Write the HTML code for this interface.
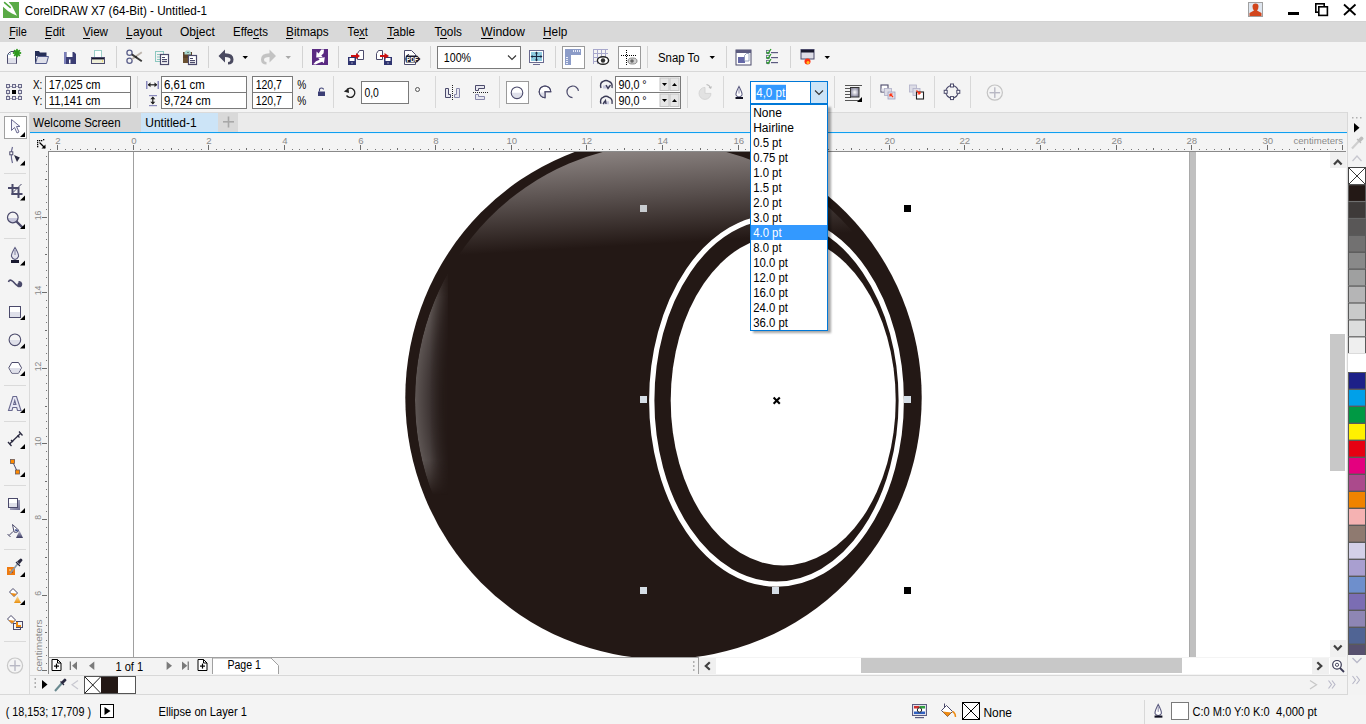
<!DOCTYPE html><html><head><meta charset="utf-8"><style>html,body{margin:0;padding:0;width:1366px;height:724px;overflow:hidden;background:#f3f3f3}svg{display:block}text{font-family:"Liberation Sans",sans-serif}</style></head><body><svg width="1366" height="724" viewBox="0 0 1366 724" shape-rendering="auto"><rect x="0" y="0" width="1366" height="724" fill="#f4f4f4" />
<rect x="0" y="0" width="1366" height="21" fill="#ffffff" />
<rect x="0" y="21" width="1366" height="21" fill="#d9d9d9" />
<rect x="0" y="21" width="1366" height="1" fill="#d3d3d3" />
<rect x="0" y="42" width="1366" height="29" fill="#f4f4f4" />
<rect x="0" y="71" width="1366" height="1" fill="#d8d8d8" />
<rect x="0" y="72" width="1366" height="40" fill="#f4f4f4" />
<rect x="0" y="112" width="1366" height="1" fill="#dadada" />
<rect x="30" y="113" width="1317" height="19" fill="#ebebeb" />
<rect x="30" y="113" width="111" height="19" fill="#d6d6d6" />
<rect x="141" y="113" width="77" height="19" fill="#cce4f7" />
<rect x="218" y="113" width="20" height="19" fill="#d9d9d9" />
<rect x="30" y="132" width="1317" height="1" fill="#0f9ff0" />
<rect x="30" y="133" width="1317" height="1" fill="#e2f1fa" />
<rect x="29" y="112" width="1" height="583" fill="#dadada" />
<defs><clipPath id="cv"><rect x="49" y="152" width="1281" height="505"/></clipPath><clipPath id="inner"><ellipse cx="664.5" cy="400" rx="249.5" ry="256"/></clipPath><linearGradient id="gtop" gradientUnits="userSpaceOnUse" x1="664" y1="148" x2="669.5" y2="243"><stop offset="0" stop-color="#8a8280"/><stop offset="0.5" stop-color="#574e4c"/><stop offset="1" stop-color="#231815"/></linearGradient><radialGradient id="gring" cx="0.5" cy="0.5" r="0.5"><stop offset="0.885" stop-color="#281f1c" stop-opacity="1"/><stop offset="0.935" stop-color="#3a3130" stop-opacity="1"/><stop offset="1" stop-color="#5e5654" stop-opacity="1"/></radialGradient><linearGradient id="gbx" gradientUnits="userSpaceOnUse" x1="430" y1="0" x2="448" y2="0"><stop offset="0" stop-color="#fff" stop-opacity="1"/><stop offset="1" stop-color="#fff" stop-opacity="0.15"/></linearGradient><linearGradient id="gby" gradientUnits="userSpaceOnUse" x1="0" y1="262" x2="0" y2="495"><stop offset="0" stop-color="#fff" stop-opacity="0"/><stop offset="0.15" stop-color="#fff" stop-opacity="1"/><stop offset="0.85" stop-color="#fff" stop-opacity="1"/><stop offset="1" stop-color="#fff" stop-opacity="0"/></linearGradient><mask id="mbx" maskUnits="userSpaceOnUse" x="380" y="150" width="120" height="500"><rect x="380" y="150" width="68" height="500" fill="url(#gbx)"/></mask><mask id="mby" maskUnits="userSpaceOnUse" x="380" y="150" width="120" height="500"><rect x="380" y="150" width="120" height="500" fill="url(#gby)"/></mask></defs>
<rect x="48" y="151" width="1298" height="506" fill="#ffffff" />
<g clip-path="url(#cv)">
<rect x="133" y="152" width="1" height="505" fill="#a0a0a0" />
<rect x="1189" y="152" width="7" height="505" fill="#c0c0c0" />
<rect x="1189" y="152" width="1" height="505" fill="#a9a9a9" />
<ellipse cx="663.5" cy="397.5" rx="258.2" ry="261.5" fill="#231815"/>
<g clip-path="url(#inner)">
<rect x="400" y="140" width="540" height="120" fill="url(#gtop)" />
<g mask="url(#mby)"><ellipse cx="664.5" cy="400" rx="249.5" ry="256" fill="url(#gring)" mask="url(#mbx)"/></g>
</g>
<ellipse cx="776.5" cy="400.5" rx="124.75" ry="183.6" fill="none" stroke="#ffffff" stroke-width="5.3"/>
<ellipse cx="783.2" cy="400.4" rx="112.5" ry="165" fill="#ffffff"/>
<rect x="640.0" y="205.0" width="7" height="7" fill="#c8ccd0" />
<rect x="904.0" y="205.0" width="7" height="7" fill="#000" />
<rect x="640.0" y="396.0" width="7" height="7" fill="#d5dde5" />
<rect x="904.0" y="396.0" width="7" height="7" fill="#d5dde5" />
<rect x="640.0" y="587.0" width="7" height="7" fill="#d5dde5" />
<rect x="772.0" y="587.0" width="7" height="7" fill="#d5dde5" />
<rect x="904.0" y="587.0" width="7" height="7" fill="#000" />
<path d="M773.6 397.6 L779.8 403.8 M779.8 397.6 L773.6 403.8" fill="none" stroke="#000" stroke-width="2.1" />
</g>
<rect x="48" y="151" width="1298" height="1" fill="#8a8a8a" />
<rect x="48" y="151" width="1" height="523" fill="#8a8a8a" />
<rect x="50" y="149" width="1" height="1" fill="#777" />
<rect x="57" y="145" width="1" height="5" fill="#6e6e6e" />
<text x="57.8" y="144" font-size="9.6" fill="#8a8a8a" text-anchor="middle">2</text>
<rect x="65" y="149" width="1" height="1" fill="#777" />
<rect x="72" y="149" width="1" height="1" fill="#777" />
<rect x="80" y="149" width="1" height="1" fill="#777" />
<rect x="87" y="149" width="1" height="1" fill="#777" />
<rect x="95" y="148" width="1" height="2" fill="#6e6e6e" />
<rect x="103" y="149" width="1" height="1" fill="#777" />
<rect x="110" y="149" width="1" height="1" fill="#777" />
<rect x="118" y="149" width="1" height="1" fill="#777" />
<rect x="125" y="149" width="1" height="1" fill="#777" />
<rect x="133" y="145" width="1" height="5" fill="#6e6e6e" />
<text x="133.8" y="144" font-size="9.6" fill="#8a8a8a" text-anchor="middle">0</text>
<rect x="140" y="149" width="1" height="1" fill="#777" />
<rect x="148" y="149" width="1" height="1" fill="#777" />
<rect x="156" y="149" width="1" height="1" fill="#777" />
<rect x="163" y="149" width="1" height="1" fill="#777" />
<rect x="171" y="148" width="1" height="2" fill="#6e6e6e" />
<rect x="178" y="149" width="1" height="1" fill="#777" />
<rect x="186" y="149" width="1" height="1" fill="#777" />
<rect x="193" y="149" width="1" height="1" fill="#777" />
<rect x="201" y="149" width="1" height="1" fill="#777" />
<rect x="208" y="145" width="1" height="5" fill="#6e6e6e" />
<text x="208.8" y="144" font-size="9.6" fill="#8a8a8a" text-anchor="middle">2</text>
<rect x="216" y="149" width="1" height="1" fill="#777" />
<rect x="224" y="149" width="1" height="1" fill="#777" />
<rect x="231" y="149" width="1" height="1" fill="#777" />
<rect x="239" y="149" width="1" height="1" fill="#777" />
<rect x="246" y="148" width="1" height="2" fill="#6e6e6e" />
<rect x="254" y="149" width="1" height="1" fill="#777" />
<rect x="261" y="149" width="1" height="1" fill="#777" />
<rect x="269" y="149" width="1" height="1" fill="#777" />
<rect x="276" y="149" width="1" height="1" fill="#777" />
<rect x="284" y="145" width="1" height="5" fill="#6e6e6e" />
<text x="284.8" y="144" font-size="9.6" fill="#8a8a8a" text-anchor="middle">4</text>
<rect x="292" y="149" width="1" height="1" fill="#777" />
<rect x="299" y="149" width="1" height="1" fill="#777" />
<rect x="307" y="149" width="1" height="1" fill="#777" />
<rect x="314" y="149" width="1" height="1" fill="#777" />
<rect x="322" y="148" width="1" height="2" fill="#6e6e6e" />
<rect x="329" y="149" width="1" height="1" fill="#777" />
<rect x="337" y="149" width="1" height="1" fill="#777" />
<rect x="345" y="149" width="1" height="1" fill="#777" />
<rect x="352" y="149" width="1" height="1" fill="#777" />
<rect x="360" y="145" width="1" height="5" fill="#6e6e6e" />
<text x="360.8" y="144" font-size="9.6" fill="#8a8a8a" text-anchor="middle">6</text>
<rect x="367" y="149" width="1" height="1" fill="#777" />
<rect x="375" y="149" width="1" height="1" fill="#777" />
<rect x="382" y="149" width="1" height="1" fill="#777" />
<rect x="390" y="149" width="1" height="1" fill="#777" />
<rect x="397" y="148" width="1" height="2" fill="#6e6e6e" />
<rect x="405" y="149" width="1" height="1" fill="#777" />
<rect x="413" y="149" width="1" height="1" fill="#777" />
<rect x="420" y="149" width="1" height="1" fill="#777" />
<rect x="428" y="149" width="1" height="1" fill="#777" />
<rect x="435" y="145" width="1" height="5" fill="#6e6e6e" />
<text x="435.8" y="144" font-size="9.6" fill="#8a8a8a" text-anchor="middle">8</text>
<rect x="443" y="149" width="1" height="1" fill="#777" />
<rect x="450" y="149" width="1" height="1" fill="#777" />
<rect x="458" y="149" width="1" height="1" fill="#777" />
<rect x="465" y="149" width="1" height="1" fill="#777" />
<rect x="473" y="148" width="1" height="2" fill="#6e6e6e" />
<rect x="481" y="149" width="1" height="1" fill="#777" />
<rect x="488" y="149" width="1" height="1" fill="#777" />
<rect x="496" y="149" width="1" height="1" fill="#777" />
<rect x="503" y="149" width="1" height="1" fill="#777" />
<rect x="511" y="145" width="1" height="5" fill="#6e6e6e" />
<text x="511.8" y="144" font-size="9.6" fill="#8a8a8a" text-anchor="middle">10</text>
<rect x="518" y="149" width="1" height="1" fill="#777" />
<rect x="526" y="149" width="1" height="1" fill="#777" />
<rect x="533" y="149" width="1" height="1" fill="#777" />
<rect x="541" y="149" width="1" height="1" fill="#777" />
<rect x="549" y="148" width="1" height="2" fill="#6e6e6e" />
<rect x="556" y="149" width="1" height="1" fill="#777" />
<rect x="564" y="149" width="1" height="1" fill="#777" />
<rect x="571" y="149" width="1" height="1" fill="#777" />
<rect x="579" y="149" width="1" height="1" fill="#777" />
<rect x="586" y="145" width="1" height="5" fill="#6e6e6e" />
<text x="586.8" y="144" font-size="9.6" fill="#8a8a8a" text-anchor="middle">12</text>
<rect x="594" y="149" width="1" height="1" fill="#777" />
<rect x="602" y="149" width="1" height="1" fill="#777" />
<rect x="609" y="149" width="1" height="1" fill="#777" />
<rect x="617" y="149" width="1" height="1" fill="#777" />
<rect x="624" y="148" width="1" height="2" fill="#6e6e6e" />
<rect x="632" y="149" width="1" height="1" fill="#777" />
<rect x="639" y="149" width="1" height="1" fill="#777" />
<rect x="647" y="149" width="1" height="1" fill="#777" />
<rect x="654" y="149" width="1" height="1" fill="#777" />
<rect x="662" y="145" width="1" height="5" fill="#6e6e6e" />
<text x="662.8" y="144" font-size="9.6" fill="#8a8a8a" text-anchor="middle">14</text>
<rect x="670" y="149" width="1" height="1" fill="#777" />
<rect x="677" y="149" width="1" height="1" fill="#777" />
<rect x="685" y="149" width="1" height="1" fill="#777" />
<rect x="692" y="149" width="1" height="1" fill="#777" />
<rect x="700" y="148" width="1" height="2" fill="#6e6e6e" />
<rect x="707" y="149" width="1" height="1" fill="#777" />
<rect x="715" y="149" width="1" height="1" fill="#777" />
<rect x="722" y="149" width="1" height="1" fill="#777" />
<rect x="730" y="149" width="1" height="1" fill="#777" />
<rect x="738" y="145" width="1" height="5" fill="#6e6e6e" />
<text x="738.8" y="144" font-size="9.6" fill="#8a8a8a" text-anchor="middle">16</text>
<rect x="745" y="149" width="1" height="1" fill="#777" />
<rect x="753" y="149" width="1" height="1" fill="#777" />
<rect x="760" y="149" width="1" height="1" fill="#777" />
<rect x="768" y="149" width="1" height="1" fill="#777" />
<rect x="775" y="148" width="1" height="2" fill="#6e6e6e" />
<rect x="783" y="149" width="1" height="1" fill="#777" />
<rect x="790" y="149" width="1" height="1" fill="#777" />
<rect x="798" y="149" width="1" height="1" fill="#777" />
<rect x="806" y="149" width="1" height="1" fill="#777" />
<rect x="813" y="145" width="1" height="5" fill="#6e6e6e" />
<text x="813.8" y="144" font-size="9.6" fill="#8a8a8a" text-anchor="middle">18</text>
<rect x="821" y="149" width="1" height="1" fill="#777" />
<rect x="828" y="149" width="1" height="1" fill="#777" />
<rect x="836" y="149" width="1" height="1" fill="#777" />
<rect x="843" y="149" width="1" height="1" fill="#777" />
<rect x="851" y="148" width="1" height="2" fill="#6e6e6e" />
<rect x="859" y="149" width="1" height="1" fill="#777" />
<rect x="866" y="149" width="1" height="1" fill="#777" />
<rect x="874" y="149" width="1" height="1" fill="#777" />
<rect x="881" y="149" width="1" height="1" fill="#777" />
<rect x="889" y="145" width="1" height="5" fill="#6e6e6e" />
<text x="889.8" y="144" font-size="9.6" fill="#8a8a8a" text-anchor="middle">20</text>
<rect x="896" y="149" width="1" height="1" fill="#777" />
<rect x="904" y="149" width="1" height="1" fill="#777" />
<rect x="911" y="149" width="1" height="1" fill="#777" />
<rect x="919" y="149" width="1" height="1" fill="#777" />
<rect x="927" y="148" width="1" height="2" fill="#6e6e6e" />
<rect x="934" y="149" width="1" height="1" fill="#777" />
<rect x="942" y="149" width="1" height="1" fill="#777" />
<rect x="949" y="149" width="1" height="1" fill="#777" />
<rect x="957" y="149" width="1" height="1" fill="#777" />
<rect x="964" y="145" width="1" height="5" fill="#6e6e6e" />
<text x="964.8" y="144" font-size="9.6" fill="#8a8a8a" text-anchor="middle">22</text>
<rect x="972" y="149" width="1" height="1" fill="#777" />
<rect x="979" y="149" width="1" height="1" fill="#777" />
<rect x="987" y="149" width="1" height="1" fill="#777" />
<rect x="995" y="149" width="1" height="1" fill="#777" />
<rect x="1002" y="148" width="1" height="2" fill="#6e6e6e" />
<rect x="1010" y="149" width="1" height="1" fill="#777" />
<rect x="1017" y="149" width="1" height="1" fill="#777" />
<rect x="1025" y="149" width="1" height="1" fill="#777" />
<rect x="1032" y="149" width="1" height="1" fill="#777" />
<rect x="1040" y="145" width="1" height="5" fill="#6e6e6e" />
<text x="1040.8" y="144" font-size="9.6" fill="#8a8a8a" text-anchor="middle">24</text>
<rect x="1047" y="149" width="1" height="1" fill="#777" />
<rect x="1055" y="149" width="1" height="1" fill="#777" />
<rect x="1063" y="149" width="1" height="1" fill="#777" />
<rect x="1070" y="149" width="1" height="1" fill="#777" />
<rect x="1078" y="148" width="1" height="2" fill="#6e6e6e" />
<rect x="1085" y="149" width="1" height="1" fill="#777" />
<rect x="1093" y="149" width="1" height="1" fill="#777" />
<rect x="1100" y="149" width="1" height="1" fill="#777" />
<rect x="1108" y="149" width="1" height="1" fill="#777" />
<rect x="1116" y="145" width="1" height="5" fill="#6e6e6e" />
<text x="1116.8" y="144" font-size="9.6" fill="#8a8a8a" text-anchor="middle">26</text>
<rect x="1123" y="149" width="1" height="1" fill="#777" />
<rect x="1131" y="149" width="1" height="1" fill="#777" />
<rect x="1138" y="149" width="1" height="1" fill="#777" />
<rect x="1146" y="149" width="1" height="1" fill="#777" />
<rect x="1153" y="148" width="1" height="2" fill="#6e6e6e" />
<rect x="1161" y="149" width="1" height="1" fill="#777" />
<rect x="1168" y="149" width="1" height="1" fill="#777" />
<rect x="1176" y="149" width="1" height="1" fill="#777" />
<rect x="1184" y="149" width="1" height="1" fill="#777" />
<rect x="1191" y="145" width="1" height="5" fill="#6e6e6e" />
<text x="1191.8" y="144" font-size="9.6" fill="#8a8a8a" text-anchor="middle">28</text>
<rect x="1199" y="149" width="1" height="1" fill="#777" />
<rect x="1206" y="149" width="1" height="1" fill="#777" />
<rect x="1214" y="149" width="1" height="1" fill="#777" />
<rect x="1221" y="149" width="1" height="1" fill="#777" />
<rect x="1229" y="148" width="1" height="2" fill="#6e6e6e" />
<rect x="1236" y="149" width="1" height="1" fill="#777" />
<rect x="1244" y="149" width="1" height="1" fill="#777" />
<rect x="1252" y="149" width="1" height="1" fill="#777" />
<rect x="1259" y="149" width="1" height="1" fill="#777" />
<rect x="1267" y="145" width="1" height="5" fill="#6e6e6e" />
<text x="1267.8" y="144" font-size="9.6" fill="#8a8a8a" text-anchor="middle">30</text>
<rect x="1274" y="149" width="1" height="1" fill="#777" />
<rect x="1282" y="149" width="1" height="1" fill="#777" />
<rect x="1289" y="149" width="1" height="1" fill="#777" />
<rect x="1297" y="149" width="1" height="1" fill="#777" />
<rect x="1304" y="148" width="1" height="2" fill="#6e6e6e" />
<rect x="1312" y="149" width="1" height="1" fill="#777" />
<rect x="1320" y="149" width="1" height="1" fill="#777" />
<rect x="1327" y="149" width="1" height="1" fill="#777" />
<rect x="1335" y="149" width="1" height="1" fill="#777" />
<rect x="1342" y="145" width="1" height="5" fill="#6e6e6e" />
<text x="1293.5" y="144.3" font-size="9.5" fill="#8a8a8a" textLength="49.5" lengthAdjust="spacingAndGlyphs" >centimeters</text>
<rect x="1342" y="145" width="1" height="5" fill="#6e6e6e" />
<rect x="42" y="670" width="5" height="1" fill="#6e6e6e" />
<rect x="46" y="663" width="1" height="1" fill="#777" />
<rect x="46" y="655" width="1" height="1" fill="#777" />
<rect x="46" y="647" width="1" height="1" fill="#777" />
<rect x="46" y="640" width="1" height="1" fill="#777" />
<rect x="45" y="632" width="2" height="1" fill="#6e6e6e" />
<rect x="46" y="625" width="1" height="1" fill="#777" />
<rect x="46" y="617" width="1" height="1" fill="#777" />
<rect x="46" y="610" width="1" height="1" fill="#777" />
<rect x="46" y="602" width="1" height="1" fill="#777" />
<rect x="42" y="595" width="5" height="1" fill="#6e6e6e" />
<text x="41.2" y="593.4" font-size="9.6" fill="#888888" textLength="4.8" lengthAdjust="spacingAndGlyphs" text-anchor="middle" transform="rotate(-90 41.2 593.4)">6</text>
<rect x="46" y="587" width="1" height="1" fill="#777" />
<rect x="46" y="579" width="1" height="1" fill="#777" />
<rect x="46" y="572" width="1" height="1" fill="#777" />
<rect x="46" y="564" width="1" height="1" fill="#777" />
<rect x="45" y="557" width="2" height="1" fill="#6e6e6e" />
<rect x="46" y="549" width="1" height="1" fill="#777" />
<rect x="46" y="542" width="1" height="1" fill="#777" />
<rect x="46" y="534" width="1" height="1" fill="#777" />
<rect x="46" y="527" width="1" height="1" fill="#777" />
<rect x="42" y="519" width="5" height="1" fill="#6e6e6e" />
<text x="41.2" y="517.4" font-size="9.6" fill="#888888" textLength="4.8" lengthAdjust="spacingAndGlyphs" text-anchor="middle" transform="rotate(-90 41.2 517.4)">8</text>
<rect x="46" y="511" width="1" height="1" fill="#777" />
<rect x="46" y="504" width="1" height="1" fill="#777" />
<rect x="46" y="496" width="1" height="1" fill="#777" />
<rect x="46" y="489" width="1" height="1" fill="#777" />
<rect x="45" y="481" width="2" height="1" fill="#6e6e6e" />
<rect x="46" y="474" width="1" height="1" fill="#777" />
<rect x="46" y="466" width="1" height="1" fill="#777" />
<rect x="46" y="459" width="1" height="1" fill="#777" />
<rect x="46" y="451" width="1" height="1" fill="#777" />
<rect x="42" y="443" width="5" height="1" fill="#6e6e6e" />
<text x="41.2" y="441.4" font-size="9.6" fill="#888888" textLength="9.61" lengthAdjust="spacingAndGlyphs" text-anchor="middle" transform="rotate(-90 41.2 441.4)">10</text>
<rect x="46" y="436" width="1" height="1" fill="#777" />
<rect x="46" y="428" width="1" height="1" fill="#777" />
<rect x="46" y="421" width="1" height="1" fill="#777" />
<rect x="46" y="413" width="1" height="1" fill="#777" />
<rect x="45" y="406" width="2" height="1" fill="#6e6e6e" />
<rect x="46" y="398" width="1" height="1" fill="#777" />
<rect x="46" y="390" width="1" height="1" fill="#777" />
<rect x="46" y="383" width="1" height="1" fill="#777" />
<rect x="46" y="375" width="1" height="1" fill="#777" />
<rect x="42" y="368" width="5" height="1" fill="#6e6e6e" />
<text x="41.2" y="366.4" font-size="9.6" fill="#888888" textLength="9.61" lengthAdjust="spacingAndGlyphs" text-anchor="middle" transform="rotate(-90 41.2 366.4)">12</text>
<rect x="46" y="360" width="1" height="1" fill="#777" />
<rect x="46" y="353" width="1" height="1" fill="#777" />
<rect x="46" y="345" width="1" height="1" fill="#777" />
<rect x="46" y="338" width="1" height="1" fill="#777" />
<rect x="45" y="330" width="2" height="1" fill="#6e6e6e" />
<rect x="46" y="322" width="1" height="1" fill="#777" />
<rect x="46" y="315" width="1" height="1" fill="#777" />
<rect x="46" y="307" width="1" height="1" fill="#777" />
<rect x="46" y="300" width="1" height="1" fill="#777" />
<rect x="42" y="292" width="5" height="1" fill="#6e6e6e" />
<text x="41.2" y="290.4" font-size="9.6" fill="#888888" textLength="9.61" lengthAdjust="spacingAndGlyphs" text-anchor="middle" transform="rotate(-90 41.2 290.4)">14</text>
<rect x="46" y="285" width="1" height="1" fill="#777" />
<rect x="46" y="277" width="1" height="1" fill="#777" />
<rect x="46" y="270" width="1" height="1" fill="#777" />
<rect x="46" y="262" width="1" height="1" fill="#777" />
<rect x="45" y="254" width="2" height="1" fill="#6e6e6e" />
<rect x="46" y="247" width="1" height="1" fill="#777" />
<rect x="46" y="239" width="1" height="1" fill="#777" />
<rect x="46" y="232" width="1" height="1" fill="#777" />
<rect x="46" y="224" width="1" height="1" fill="#777" />
<rect x="42" y="217" width="5" height="1" fill="#6e6e6e" />
<text x="41.2" y="215.4" font-size="9.6" fill="#888888" textLength="9.61" lengthAdjust="spacingAndGlyphs" text-anchor="middle" transform="rotate(-90 41.2 215.4)">16</text>
<rect x="46" y="209" width="1" height="1" fill="#777" />
<rect x="46" y="202" width="1" height="1" fill="#777" />
<rect x="46" y="194" width="1" height="1" fill="#777" />
<rect x="46" y="186" width="1" height="1" fill="#777" />
<rect x="45" y="179" width="2" height="1" fill="#6e6e6e" />
<rect x="46" y="171" width="1" height="1" fill="#777" />
<rect x="46" y="164" width="1" height="1" fill="#777" />
<rect x="46" y="156" width="1" height="1" fill="#777" />
<text x="41.6" y="671.6" font-size="9.6" fill="#8a8a8a" textLength="52.2" lengthAdjust="spacingAndGlyphs" transform="rotate(-90 41.6 671.6)">centimeters</text>
<text x="24.8" y="15" font-size="12" fill="#000" textLength="182.3" lengthAdjust="spacingAndGlyphs" >CorelDRAW X7 (64-Bit) - Untitled-1</text>
<rect x="3" y="2" width="16" height="16" fill="#4ea83c" />
<rect x="3" y="2" width="16" height="16" fill="#5aaa46" />
<path d="M3 2 L8.6 2 Q12.2 5.5 13.5 9 L17 15.8 L12 13.6 Q7.5 11.2 3 6.8 Z" fill="#ffffff" stroke="none" stroke-width="1" />
<path d="M4.6 2.6 L10.2 7.4" fill="none" stroke="#4ea83c" stroke-width="1.6" stroke-linecap="round"/>
<rect x="1248" y="2" width="15" height="15" fill="#dfe6ef" />
<rect x="1248.5" y="2.5" width="14" height="14" fill="none" stroke="#a0a0a0" stroke-width="1"/>
<path d="M1252.5 6.5 Q1252.5 3.5 1255.5 3.5 Q1258.5 3.5 1258.5 6.5 Q1258.5 9 1257 10.5 L1261.5 13 L1261.5 16 L1249.5 16 L1249.5 13 L1254 10.5 Q1252.5 9 1252.5 6.5 Z" fill="#d2451c" stroke="none" stroke-width="1" />
<rect x="1288" y="12" width="11" height="3" fill="#000" />
<rect x="1315.8" y="3.8" width="8.4" height="8.4" fill="none" stroke="#000" stroke-width="1.6"/>
<rect x="1318" y="6" width="10" height="10" fill="#ffffff" />
<rect x="1318.8" y="6.8" width="8.6" height="8.6" fill="none" stroke="#000" stroke-width="1.6"/>
<path d="M1344 4.5 L1355.5 15 M1355.5 4.5 L1344 15" fill="none" stroke="#000" stroke-width="1.8" />
<text x="9.2" y="36" font-size="12" fill="#000" textLength="17.6" lengthAdjust="spacingAndGlyphs" >File</text>
<text x="45" y="36" font-size="12" fill="#000" textLength="19.8" lengthAdjust="spacingAndGlyphs" >Edit</text>
<text x="83" y="36" font-size="12" fill="#000" textLength="25" lengthAdjust="spacingAndGlyphs" >View</text>
<text x="126.3" y="36" font-size="12" fill="#000" textLength="35.7" lengthAdjust="spacingAndGlyphs" >Layout</text>
<text x="180" y="36" font-size="12" fill="#000" textLength="34.8" lengthAdjust="spacingAndGlyphs" >Object</text>
<text x="233" y="36" font-size="12" fill="#000" textLength="35" lengthAdjust="spacingAndGlyphs" >Effects</text>
<text x="286.1" y="36" font-size="12" fill="#000" textLength="42.7" lengthAdjust="spacingAndGlyphs" >Bitmaps</text>
<text x="347.6" y="36" font-size="12" fill="#000" textLength="20.3" lengthAdjust="spacingAndGlyphs" >Text</text>
<text x="387.2" y="36" font-size="12" fill="#000" textLength="27.8" lengthAdjust="spacingAndGlyphs" >Table</text>
<text x="434.4" y="36" font-size="12" fill="#000" textLength="27.5" lengthAdjust="spacingAndGlyphs" >Tools</text>
<text x="481" y="36" font-size="12" fill="#000" textLength="43.9" lengthAdjust="spacingAndGlyphs" >Window</text>
<text x="543.1" y="36" font-size="12" fill="#000" textLength="24.2" lengthAdjust="spacingAndGlyphs" >Help</text>
<rect x="9" y="38" width="6" height="1" fill="#000" />
<rect x="45" y="38" width="6" height="1" fill="#000" />
<rect x="83" y="38" width="7" height="1" fill="#000" />
<rect x="126" y="38" width="6" height="1" fill="#000" />
<rect x="195" y="38" width="4" height="1" fill="#000" />
<rect x="253" y="38" width="6" height="1" fill="#000" />
<rect x="286" y="38" width="7" height="1" fill="#000" />
<rect x="359" y="38" width="6" height="1" fill="#000" />
<rect x="387" y="38" width="7" height="1" fill="#000" />
<rect x="440" y="38" width="7" height="1" fill="#000" />
<rect x="481" y="38" width="12" height="1" fill="#000" />
<rect x="543" y="38" width="8" height="1" fill="#000" />
<text x="33.3" y="127" font-size="12" fill="#000" textLength="87.3" lengthAdjust="spacingAndGlyphs" >Welcome Screen</text>
<text x="145.2" y="127" font-size="12" fill="#000" textLength="51.5" lengthAdjust="spacingAndGlyphs" >Untitled-1</text>
<rect x="223" y="121" width="11" height="1.6" fill="#a8a8a8" />
<rect x="227.7" y="116.5" width="1.6" height="11" fill="#a8a8a8" />
<rect x="116" y="46" width="1" height="22" fill="#d3d3d3" />
<rect x="208" y="46" width="1" height="22" fill="#d3d3d3" />
<rect x="302" y="46" width="1" height="22" fill="#d3d3d3" />
<rect x="338" y="46" width="1" height="22" fill="#d3d3d3" />
<rect x="430" y="46" width="1" height="22" fill="#d3d3d3" />
<rect x="555" y="46" width="1" height="22" fill="#d3d3d3" />
<rect x="647" y="46" width="1" height="22" fill="#d3d3d3" />
<rect x="726" y="46" width="1" height="22" fill="#d3d3d3" />
<rect x="790" y="46" width="1" height="22" fill="#d3d3d3" />
<path d="M7.5 54.5 L10.5 51.5 L16.5 51.5 L16.5 63.5 L7.5 63.5 Z" fill="#ffffff" stroke="#4b4a6b" stroke-width="1" />
<rect x="8" y="58" width="8" height="5.5" fill="#dfe0ea" />
<path d="M7.5 54.5 L10.5 54.5 L10.5 51.5" fill="none" stroke="#9ab8c8" stroke-width="1" />
<circle cx="17" cy="53" r="2.9" fill="#2e9a1e"/>
<circle cx="20.40" cy="53.00" r="0.9" fill="#2e9a1e"/>
<circle cx="19.40" cy="55.40" r="0.9" fill="#2e9a1e"/>
<circle cx="17.00" cy="56.40" r="0.9" fill="#2e9a1e"/>
<circle cx="14.60" cy="55.40" r="0.9" fill="#2e9a1e"/>
<circle cx="13.60" cy="53.00" r="0.9" fill="#2e9a1e"/>
<circle cx="14.60" cy="50.60" r="0.9" fill="#2e9a1e"/>
<circle cx="17.00" cy="49.60" r="0.9" fill="#2e9a1e"/>
<circle cx="19.40" cy="50.60" r="0.9" fill="#2e9a1e"/>
<path d="M35 51 L39 51 L40 52.5 L46.5 52.5 L46.5 56 L35 56 Z" fill="#262f57" stroke="none" stroke-width="1" />
<path d="M35.5 63.5 L35.5 51.5" fill="none" stroke="#262f57" stroke-width="1" />
<path d="M35.5 63.5 L37.5 56.5 L48.5 56.5 L46.5 63.5 Z" fill="#dfe0ea" stroke="#525a8a" stroke-width="1" />
<rect x="64" y="52" width="12" height="12" fill="#3b3e74" />
<rect x="64" y="52" width="2" height="12" fill="#7b7fb8" />
<rect x="66.5" y="52" width="6" height="5" fill="#ffffff" />
<rect x="69" y="59.5" width="1.5" height="4" fill="#ffffff" />
<path d="M74 52 L76 54 L76 52 Z" fill="#f3f3f3" stroke="none" stroke-width="1" />
<rect x="94.5" y="50.5" width="7" height="7" fill="#ffffff" stroke="#9ccfc8" stroke-width="1"/>
<rect x="91" y="57" width="14" height="7" fill="#4b4a6b" />
<rect x="92" y="58" width="12" height="1.5" fill="#1a1a2e" />
<rect x="92" y="59.5" width="12" height="3.5" fill="#eeeed8" />
<rect x="102" y="60.5" width="1" height="1" fill="#e8c820" />
<circle cx="129.5" cy="52.8" r="2.6" fill="none" stroke="#5a5f8a" stroke-width="1.3"/>
<circle cx="129.5" cy="60.8" r="2.6" fill="none" stroke="#5a5f8a" stroke-width="1.3"/>
<path d="M131.8 59.2 L141.8 52.3" fill="none" stroke="#bdb5ad" stroke-width="1.9" />
<path d="M131.8 54.4 L141.8 61.2" fill="none" stroke="#3a3a3a" stroke-width="1.9" />
<circle cx="136" cy="57" r="0.9" fill="#222"/>
<rect x="155.5" y="51.5" width="8" height="10" fill="#f3f3f3" stroke="#8cc8c0" stroke-width="1"/>
<rect x="157" y="54" width="3" height="1" fill="#8cc8c0" />
<rect x="157" y="56.5" width="3" height="1" fill="#8cc8c0" />
<rect x="157" y="59" width="3" height="1" fill="#8cc8c0" />
<rect x="160.5" y="54.5" width="8" height="10" fill="#ffffff" stroke="#4b4a6b" stroke-width="1.2"/>
<rect x="162" y="57" width="3" height="1" fill="#4b4a6b" />
<rect x="162" y="59" width="5" height="1.2" fill="#4b4a6b" />
<rect x="162" y="61" width="5" height="1.2" fill="#4b4a6b" />
<rect x="183" y="52" width="9" height="11" fill="#5a4028" />
<rect x="183" y="58" width="9" height="5" fill="#6a5030" />
<path d="M184.5 52.5 L186 50.5 L189.5 50.5 L191 52.5 L191 54.5 L184.5 54.5 Z" fill="#a8d8d0" stroke="none" stroke-width="1" />
<rect x="187.5" y="52" width="1" height="1" fill="#333" />
<rect x="188.5" y="55.5" width="8" height="9" fill="#ffffff" stroke="#4b4a6b" stroke-width="1.2"/>
<rect x="190" y="58" width="3" height="1" fill="#4b4a6b" />
<rect x="190" y="60" width="5" height="1.2" fill="#4b4a6b" />
<rect x="190" y="62" width="5" height="1.2" fill="#4b4a6b" />
<path d="M218.5 56 L225 49.5 L225 53.2 Q233.5 53.2 233.5 59.5 Q233.5 64.5 228 64.5 L228 62 Q230.5 62 230.5 59.5 Q230.5 57 225 57 L225 62.5 Z" fill="#4a4a60" stroke="none" stroke-width="1" />
<path d="M242.5 56 L248 56 L245.25 59 Z" fill="#000" stroke="none" stroke-width="1" />
<path d="M276 56 L269.5 49.5 L269.5 53.2 Q261 53.2 261 59.5 Q261 64.5 266.5 64.5 L266.5 62 Q264 62 264 59.5 Q264 57 269.5 57 L269.5 62.5 Z" fill="#c3c3c3" stroke="none" stroke-width="1" />
<path d="M285.5 56 L291 56 L288.25 59 Z" fill="#a8a8a8" stroke="none" stroke-width="1" />
<rect x="312" y="49" width="16" height="16" fill="#5a2a82" />
<path d="M321.2 49.5 L324 49.5 L323.6 53.2 L321.3 55.6 L322.8 57.3 L316.2 57.6 L316.6 51.6 L318.6 53.4 Z" fill="#ffffff" stroke="none" stroke-width="1" />
<path d="M313.2 64.2 Q315.5 60.6 319.6 59.7 L318.3 58.2 L324.8 57.2 L323.9 63.3 L322.2 61.7 Q318.5 62.6 315.6 64.6 Z" fill="#ffffff" stroke="none" stroke-width="1" />
<rect x="348" y="57" width="8" height="8" fill="#2f3470" />
<rect x="349.5" y="58" width="5" height="3" fill="#ffffff" />
<rect x="351.5" y="62.5" width="1" height="1" fill="#fff" />
<path d="M357.5 53.5 L359.5 50.5 L363.5 50.5 L363.5 59.5 L357.5 59.5 Z" fill="#ffffff" stroke="#4b4a6b" stroke-width="1" />
<rect x="351" y="55" width="6" height="2" fill="#cc1010" />
<path d="M356 53 L360 56 L356 59 Z" fill="#cc1010" stroke="none" stroke-width="1" />
<path d="M376.5 53.5 L378.5 50.5 L382.5 50.5 L382.5 59.5 L376.5 59.5 Z" fill="#ffffff" stroke="#4b4a6b" stroke-width="1" />
<rect x="384" y="57" width="8" height="8" fill="#2f3470" />
<rect x="385.5" y="58" width="5" height="3" fill="#ffffff" />
<rect x="387.5" y="62.5" width="1" height="1" fill="#fff" />
<rect x="380" y="55" width="5" height="2" fill="#cc1010" />
<path d="M384.5 53 L389 56 L384.5 59 Z" fill="#cc1010" stroke="none" stroke-width="1" />
<path d="M404.5 50.5 L411.5 50.5 L415.5 54.5 L415.5 64.5 L404.5 64.5 Z" fill="#ffffff" stroke="#4b4a6b" stroke-width="1" />
<path d="M406 55.5 L417 55.5 L420.5 59 L417 62.5 L406 62.5 Q404.5 59 406 55.5 Z" fill="#1a1a2e" stroke="none" stroke-width="1" />
<path d="M409 54.5 Q407 55 407 56.5" fill="none" stroke="#1a1a2e" stroke-width="1.2" />
<text x="406.6" y="61.5" font-size="7" fill="#ffffff" textLength="11.5" lengthAdjust="spacingAndGlyphs" font-weight="bold">PDF</text>
<rect x="437" y="46" width="84" height="23" fill="#ffffff" />
<rect x="437.5" y="46.5" width="83" height="22" fill="none" stroke="#7a7a7a" stroke-width="1"/>
<text x="443.8" y="62" font-size="12" fill="#000" textLength="27.3" lengthAdjust="spacingAndGlyphs" >100%</text>
<path d="M508 55.5 L512 59.5 L516 55.5" fill="none" stroke="#333" stroke-width="1.1" />
<rect x="529.5" y="50.5" width="14" height="12" fill="#ffffff" stroke="#6a6a90" stroke-width="1"/>
<rect x="531" y="52" width="11" height="9" fill="#8ecae0" />
<path d="M536.5 52 L536.5 61 M531 56.5 L542 56.5" fill="none" stroke="#1a2540" stroke-width="1.1" />
<path d="M536.5 51.5 L535 53.5 L538 53.5 Z M536.5 61.5 L535 59.5 L538 59.5 Z M530.5 56.5 L532.5 55 L532.5 58 Z M542.5 56.5 L540.5 55 L540.5 58 Z" fill="#1a2540" stroke="none" stroke-width="1" />
<rect x="533" y="64" width="7" height="1" fill="#6a6a90" />
<rect x="562" y="46" width="23" height="23" fill="#ffffff" />
<rect x="562.5" y="46.5" width="22" height="22" fill="none" stroke="#9a9a9a" stroke-width="1"/>
<path d="M565 49 L581 49 L581 55 L571 55 L571 65 L565 65 Z" fill="#8c9cc8" stroke="none" stroke-width="1" />
<rect x="573" y="50" width="1" height="2" fill="#e8ecf8" />
<rect x="575" y="50" width="1" height="2" fill="#e8ecf8" />
<rect x="577" y="50" width="1" height="2" fill="#e8ecf8" />
<rect x="579" y="50" width="1" height="2" fill="#e8ecf8" />
<rect x="566" y="57" width="2" height="1" fill="#e8ecf8" />
<rect x="566" y="59" width="2" height="1" fill="#e8ecf8" />
<rect x="566" y="61" width="2" height="1" fill="#e8ecf8" />
<rect x="566" y="63" width="2" height="1" fill="#e8ecf8" />
<rect x="593" y="49" width="1" height="15" fill="#a8a8cc" />
<rect x="597" y="49" width="1" height="15" fill="#a8a8cc" />
<rect x="601" y="49" width="1" height="15" fill="#a8a8cc" />
<rect x="605" y="49" width="1" height="15" fill="#a8a8cc" />
<rect x="593" y="49" width="15" height="1" fill="#a8a8cc" />
<rect x="593" y="53" width="15" height="1" fill="#a8a8cc" />
<rect x="593" y="57" width="15" height="1" fill="#a8a8cc" />
<rect x="593" y="61" width="15" height="1" fill="#a8a8cc" />
<ellipse cx="603" cy="60.5" rx="5.6" ry="3.8" fill="#ffffff" stroke="#222" stroke-width="1.4"/>
<circle cx="603" cy="60.5" r="2.2" fill="#333"/>
<rect x="618" y="46" width="23" height="23" fill="#ffffff" />
<rect x="618.5" y="46.5" width="22" height="22" fill="none" stroke="#9a9a9a" stroke-width="1"/>
<rect x="626" y="50" width="1" height="1" fill="#000" />
<rect x="626" y="52" width="1" height="1" fill="#000" />
<rect x="626" y="54" width="1" height="1" fill="#000" />
<rect x="626" y="56" width="1" height="1" fill="#000" />
<rect x="626" y="58" width="1" height="1" fill="#000" />
<rect x="626" y="60" width="1" height="1" fill="#000" />
<rect x="626" y="62" width="1" height="1" fill="#000" />
<rect x="626" y="64" width="1" height="1" fill="#000" />
<rect x="621" y="55" width="1" height="1" fill="#000" />
<rect x="623" y="55" width="1" height="1" fill="#000" />
<rect x="625" y="55" width="1" height="1" fill="#000" />
<rect x="627" y="55" width="1" height="1" fill="#000" />
<rect x="629" y="55" width="1" height="1" fill="#000" />
<rect x="631" y="55" width="1" height="1" fill="#000" />
<rect x="633" y="55" width="1" height="1" fill="#000" />
<rect x="635" y="55" width="1" height="1" fill="#000" />
<ellipse cx="632.5" cy="61" rx="4.5" ry="3" fill="#d0d0d0" stroke="#888" stroke-width="1"/>
<circle cx="632" cy="61" r="1.8" fill="#666"/>
<text x="658" y="62" font-size="12" fill="#000" textLength="41.6" lengthAdjust="spacingAndGlyphs" >Snap To</text>
<path d="M709.5 56 L715 56 L712.25 59 Z" fill="#000" stroke="none" stroke-width="1" />
<rect x="736" y="50" width="15" height="15" fill="#ffffff" stroke="#4b4a6b" stroke-width="1"/>
<rect x="736" y="50" width="15" height="3" fill="#5c5c80" />
<rect x="738" y="57" width="7" height="6" fill="#6468a8" />
<path d="M744.5 55.5 L746.5 53.5 L749 53.5 L749 61 L744.5 61 Z" fill="#ffffff" stroke="#8090b0" stroke-width="0.8" />
<rect x="766.5" y="50.5" width="3" height="3" fill="#ffffff" stroke="#6a6a90" stroke-width="0.8"/>
<path d="M766.5 52 L768 53.5 L771 49" fill="none" stroke="#2a9a2a" stroke-width="1.3" />
<rect x="771" y="52" width="7" height="1.2" fill="#5c5c80" />
<rect x="766.5" y="55.5" width="3" height="3" fill="#ffffff" stroke="#6a6a90" stroke-width="0.8"/>
<path d="M766.5 57 L768 58.5 L771 54" fill="none" stroke="#2a9a2a" stroke-width="1.3" />
<rect x="771" y="57" width="7" height="1.2" fill="#5c5c80" />
<rect x="766.5" y="60.5" width="3" height="3" fill="#ffffff" stroke="#6a6a90" stroke-width="0.8"/>
<path d="M766.5 62 L768 63.5 L771 59" fill="none" stroke="#2a9a2a" stroke-width="1.3" />
<rect x="771" y="62" width="7" height="1.2" fill="#5c5c80" />
<rect x="801" y="49.5" width="13" height="9.5" fill="#dcdce6" stroke="#4b4a6b" stroke-width="1"/>
<rect x="801" y="50" width="13" height="2.5" fill="#1a1a2e" />
<circle cx="807.5" cy="61.5" r="3" fill="#ff3010"/>
<circle cx="808" cy="62.5" r="1.5" fill="#ffc020"/>
<path d="M824.5 56 L830 56 L827.25 59 Z" fill="#000" stroke="none" stroke-width="1" />
<rect x="137" y="76" width="1" height="32" fill="#d8d8d8" />
<rect x="333" y="76" width="1" height="32" fill="#d8d8d8" />
<rect x="435" y="76" width="1" height="32" fill="#d8d8d8" />
<rect x="499" y="76" width="1" height="32" fill="#d8d8d8" />
<rect x="591" y="76" width="1" height="32" fill="#d8d8d8" />
<rect x="687" y="76" width="1" height="32" fill="#d8d8d8" />
<rect x="723" y="76" width="1" height="32" fill="#d8d8d8" />
<rect x="834" y="76" width="1" height="32" fill="#d8d8d8" />
<rect x="870" y="76" width="1" height="32" fill="#d8d8d8" />
<rect x="934" y="76" width="1" height="32" fill="#d8d8d8" />
<rect x="970" y="76" width="1" height="32" fill="#d8d8d8" />
<rect x="6.5" y="84.5" width="3" height="3" fill="#e4e4ec" stroke="#6a6a8a" stroke-width="1"/>
<rect x="6.5" y="90.5" width="3" height="3" fill="#e4e4ec" stroke="#6a6a8a" stroke-width="1"/>
<rect x="6.5" y="96.5" width="3" height="3" fill="#e4e4ec" stroke="#6a6a8a" stroke-width="1"/>
<rect x="12.5" y="84.5" width="3" height="3" fill="#e4e4ec" stroke="#6a6a8a" stroke-width="1"/>
<rect x="12" y="90" width="4" height="4" fill="#000" />
<rect x="12.5" y="96.5" width="3" height="3" fill="#e4e4ec" stroke="#6a6a8a" stroke-width="1"/>
<rect x="18.5" y="84.5" width="3" height="3" fill="#e4e4ec" stroke="#6a6a8a" stroke-width="1"/>
<rect x="18.5" y="90.5" width="3" height="3" fill="#e4e4ec" stroke="#6a6a8a" stroke-width="1"/>
<rect x="18.5" y="96.5" width="3" height="3" fill="#e4e4ec" stroke="#6a6a8a" stroke-width="1"/>
<rect x="10" y="86" width="2" height="0.8" fill="#8a8aa0" />
<rect x="16" y="86" width="2" height="0.8" fill="#8a8aa0" />
<rect x="10" y="98" width="2" height="0.8" fill="#8a8aa0" />
<rect x="16" y="98" width="2" height="0.8" fill="#8a8aa0" />
<rect x="7.5" y="88" width="0.8" height="2" fill="#8a8aa0" />
<rect x="7.5" y="94" width="0.8" height="2" fill="#8a8aa0" />
<rect x="19.5" y="88" width="0.8" height="2" fill="#8a8aa0" />
<rect x="19.5" y="94" width="0.8" height="2" fill="#8a8aa0" />
<text x="33" y="89" font-size="12" fill="#000" textLength="9.3" lengthAdjust="spacingAndGlyphs" >X:</text>
<text x="33" y="105" font-size="12" fill="#000" textLength="9.3" lengthAdjust="spacingAndGlyphs" >Y:</text>
<rect x="45" y="76" width="86" height="33" fill="#ffffff" />
<rect x="45.5" y="76.5" width="85" height="32" fill="none" stroke="#7a7a7a" stroke-width="1"/>
<rect x="45" y="92" width="86" height="1" fill="#7a7a7a" />
<text x="48.8" y="89" font-size="12" fill="#000" textLength="51.7" lengthAdjust="spacingAndGlyphs" >17,025 cm</text>
<text x="48.8" y="105" font-size="12" fill="#000" textLength="51.7" lengthAdjust="spacingAndGlyphs" >11,141 cm</text>
<rect x="146" y="81" width="1.5" height="8" fill="#8888bb" />
<rect x="157.5" y="81" width="1.5" height="8" fill="#8888bb" />
<path d="M148 84.8 L157 84.8" fill="none" stroke="#222" stroke-width="1.2" />
<path d="M147.8 84.8 L150.5 82.3 L150.5 87.3 Z M157.2 84.8 L154.5 82.3 L154.5 87.3 Z" fill="#222" stroke="none" stroke-width="1" />
<rect x="149" y="95" width="8" height="1.2" fill="#8888bb" />
<rect x="149" y="105" width="8" height="1.2" fill="#8888bb" />
<path d="M152.8 97 L152.8 104" fill="none" stroke="#222" stroke-width="1.2" />
<path d="M152.8 96.5 L150.3 99.2 L155.3 99.2 Z M152.8 104.5 L150.3 101.8 L155.3 101.8 Z" fill="#222" stroke="none" stroke-width="1" />
<rect x="161" y="76" width="86" height="33" fill="#ffffff" />
<rect x="161.5" y="76.5" width="85" height="32" fill="none" stroke="#7a7a7a" stroke-width="1"/>
<rect x="161" y="92" width="86" height="1" fill="#7a7a7a" />
<text x="164" y="89" font-size="12" fill="#000" textLength="40.7" lengthAdjust="spacingAndGlyphs" >6,61 cm</text>
<text x="164" y="105" font-size="12" fill="#000" textLength="46.7" lengthAdjust="spacingAndGlyphs" >9,724 cm</text>
<rect x="252" y="76" width="41" height="33" fill="#ffffff" />
<rect x="252.5" y="76.5" width="40" height="32" fill="none" stroke="#7a7a7a" stroke-width="1"/>
<rect x="252" y="92" width="41" height="1" fill="#7a7a7a" />
<text x="255.7" y="89" font-size="12" fill="#000" textLength="26.2" lengthAdjust="spacingAndGlyphs" >120,7</text>
<text x="255.7" y="105" font-size="12" fill="#000" textLength="26.2" lengthAdjust="spacingAndGlyphs" >120,7</text>
<text x="297.2" y="89" font-size="12" fill="#000" textLength="9" lengthAdjust="spacingAndGlyphs" >%</text>
<text x="297.2" y="105" font-size="12" fill="#000" textLength="9" lengthAdjust="spacingAndGlyphs" >%</text>
<rect x="318" y="91.5" width="7" height="4.5" fill="#3b3e74" />
<path d="M319.5 91.5 L319.5 89.5 Q319.5 88 321.5 88 Q323.5 88 323.5 89.5" fill="none" stroke="#3b3e74" stroke-width="1.1" />
<path d="M347 89.5 A4.6 4.6 0 1 1 346.5 95.5" fill="none" stroke="#222" stroke-width="1.3" />
<path d="M343.8 91.5 L348.5 88 L349 93 Z" fill="#222" stroke="none" stroke-width="1" />
<rect x="361" y="81" width="48" height="23" fill="#ffffff" />
<rect x="361.5" y="81.5" width="47" height="22" fill="none" stroke="#7a7a7a" stroke-width="1"/>
<text x="364.4" y="97" font-size="12" fill="#000" textLength="14.4" lengthAdjust="spacingAndGlyphs" >0,0</text>
<circle cx="417.5" cy="89.5" r="2" fill="none" stroke="#555" stroke-width="1"/>
<path d="M445.5 88.5 L448.5 88.5 L448.5 94.5 L450.5 94.5 L450.5 97.5 L445.5 97.5 Z" fill="#e8e8f0" stroke="#4b4a6b" stroke-width="1" />
<path d="M459.5 88.5 L456.5 88.5 L456.5 94.5 L454.5 94.5 L454.5 97.5 L459.5 97.5 Z" fill="#e8e8f0" stroke="#8888aa" stroke-width="1" />
<rect x="452" y="85" width="1" height="1" fill="#222" />
<rect x="452" y="87" width="1" height="1" fill="#222" />
<rect x="452" y="89" width="1" height="1" fill="#222" />
<rect x="452" y="91" width="1" height="1" fill="#222" />
<rect x="452" y="93" width="1" height="1" fill="#222" />
<rect x="452" y="95" width="1" height="1" fill="#222" />
<rect x="452" y="97" width="1" height="1" fill="#222" />
<rect x="452" y="99" width="1" height="1" fill="#222" />
<path d="M475.5 85.5 L484.5 85.5 L484.5 88.5 L478.5 88.5 L478.5 90.5 L475.5 90.5 Z" fill="#e8e8f0" stroke="#4b4a6b" stroke-width="1" />
<path d="M475.5 99.5 L484.5 99.5 L484.5 96.5 L478.5 96.5 L478.5 94.5 L475.5 94.5 Z" fill="#e8e8f0" stroke="#8888aa" stroke-width="1" />
<rect x="473" y="92" width="1" height="1" fill="#222" />
<rect x="475" y="92" width="1" height="1" fill="#222" />
<rect x="477" y="92" width="1" height="1" fill="#222" />
<rect x="479" y="92" width="1" height="1" fill="#222" />
<rect x="481" y="92" width="1" height="1" fill="#222" />
<rect x="483" y="92" width="1" height="1" fill="#222" />
<rect x="485" y="92" width="1" height="1" fill="#222" />
<rect x="487" y="92" width="1" height="1" fill="#222" />
<rect x="506" y="81" width="23" height="23" fill="#ffffff" />
<rect x="506.5" y="81.5" width="22" height="22" fill="none" stroke="#9a9a9a" stroke-width="1"/>
<path d="M511.2 92.8 A5.8 5.8 0 0 0 522.8 92.8 Z" fill="#dfe0ea"/>
<circle cx="517" cy="92.8" r="5.8" fill="none" stroke="#4b4a6b" stroke-width="1.1"/>
<path d="M545 91.8 L550.8 91.8 A5.8 5.8 0 1 0 545 97.6 Z" fill="#ffffff" stroke="#4b4a6b" stroke-width="1.1" />
<path d="M539.3 92.5 A5.8 5.8 0 0 0 545 97.6 L545 92.5 Z" fill="#dfe0ea" stroke="none" stroke-width="1" />
<path d="M545 91.8 L550.8 91.8 A5.8 5.8 0 1 0 545 97.6 Z" fill="none" stroke="#4b4a6b" stroke-width="1.1" />
<path d="M578.5 90.8 A5.8 5.8 0 1 0 572.5 97.6" fill="none" stroke="#4b4a6b" stroke-width="1.2" />
<rect x="615" y="76" width="66" height="33" fill="#ffffff" />
<rect x="615.5" y="76.5" width="65" height="32" fill="none" stroke="#7a7a7a" stroke-width="1"/>
<rect x="615" y="92" width="66" height="1" fill="#7a7a7a" />
<text x="618.4" y="89" font-size="12" fill="#000" textLength="28.3" lengthAdjust="spacingAndGlyphs" >90,0 °</text>
<text x="618.4" y="105" font-size="12" fill="#000" textLength="28.3" lengthAdjust="spacingAndGlyphs" >90,0 °</text>
<rect x="660" y="78" width="9" height="12.5" fill="#e6e6e6" stroke="#c4c4c4" stroke-width="1"/>
<rect x="670" y="78" width="9" height="12.5" fill="#e6e6e6" stroke="#c4c4c4" stroke-width="1"/>
<path d="M662 83 L667 83 L664.5 86 Z" fill="#000" stroke="none" stroke-width="1" />
<path d="M672 86 L677 86 L674.5 83 Z" fill="#000" stroke="none" stroke-width="1" />
<rect x="660" y="94" width="9" height="12.5" fill="#e6e6e6" stroke="#c4c4c4" stroke-width="1"/>
<rect x="670" y="94" width="9" height="12.5" fill="#e6e6e6" stroke="#c4c4c4" stroke-width="1"/>
<path d="M662 99 L667 99 L664.5 102 Z" fill="#000" stroke="none" stroke-width="1" />
<path d="M672 102 L677 102 L674.5 99 Z" fill="#000" stroke="none" stroke-width="1" />
<path d="M601 88 Q599.5 83 603 81.5 Q606 79.5 609 81.5 Q613 83 612 88" fill="none" stroke="#3a3a55" stroke-width="1.4" />
<rect x="603" y="85.5" width="6" height="3" fill="#c8c8dc" />
<path d="M601 103.8 Q599.5 98.8 603 97.3 Q606 95.3 609 97.3 Q613 98.8 612 103.8" fill="none" stroke="#3a3a55" stroke-width="1.4" />
<rect x="603" y="101.3" width="6" height="3" fill="#c8c8dc" />
<path d="M606 85 L608 88.5 L610.5 85" fill="none" stroke="#3a3a55" stroke-width="1.3" />
<path d="M606 104 L605.5 100.5 L603 104" fill="none" stroke="#3a3a55" stroke-width="1.3" />
<path d="M705 87.4 L705 93.4 L711 93.4 A6 6 0 1 1 705 87.4 Z" fill="#e2e2e2" stroke="#d0d0d0" stroke-width="0.8" />
<path d="M706.5 84.5 Q709.5 85 710.5 88" fill="none" stroke="#bdbdbd" stroke-width="1.2" />
<path d="M708.5 87.5 L711 89 L712 86.3 Z" fill="#bdbdbd" stroke="none" stroke-width="1" />
<g transform="translate(735,86) scale(1.0)"><path d="M4 0.5 Q0.5 7 1 9 Q2 10.8 4 11 Q6 10.8 7 9 Q7.5 7 4 0.5 Z" fill="#ffffff" stroke="#5c5c80" stroke-width="1.1"/><rect x="3.5" y="2.5" width="1" height="5" fill="#9090b0"/><rect x="0.5" y="11" width="7.5" height="2" fill="#111122"/></g>
<rect x="750" y="81" width="78" height="23" fill="#ffffff" />
<rect x="811" y="82" width="16" height="21" fill="#cce4f7" />
<rect x="750.5" y="81.5" width="77" height="22" fill="none" stroke="#0078d7" stroke-width="1"/>
<rect x="810" y="82" width="1" height="21" fill="#0078d7" />
<path d="M815 90.5 L819 94.5 L823 90.5" fill="none" stroke="#333" stroke-width="1.1" />
<rect x="755.8" y="84.8" width="30.2" height="15.1" fill="#3399ff" />
<text x="756.2" y="97" font-size="12" fill="#ffffff" textLength="29" lengthAdjust="spacingAndGlyphs" >4,0 pt</text>
<rect x="845" y="85" width="6" height="1" fill="#555" />
<rect x="845" y="88" width="6" height="1" fill="#555" />
<rect x="845" y="91" width="6" height="1" fill="#555" />
<rect x="845" y="94" width="6" height="1" fill="#555" />
<rect x="845" y="97" width="6" height="1" fill="#555" />
<rect x="845" y="100" width="6" height="1" fill="#555" />
<rect x="850" y="85" width="12" height="1" fill="#555" />
<rect x="850" y="100" width="10" height="1" fill="#555" />
<defs><radialGradient id="rg1"><stop offset="0" stop-color="#ffffff"/><stop offset="1" stop-color="#8a8aa0"/></radialGradient></defs>
<rect x="850.5" y="87.5" width="8.5" height="9.5" fill="url(#rg1)" stroke="#333" stroke-width="1"/>
<path d="M857 102 L862 97 L862 102 Z" fill="#000" stroke="none" stroke-width="1" />
<rect x="881" y="85" width="7" height="7" fill="#ffffff" stroke="#4b4a6b" stroke-width="1.1"/>
<rect x="881.5" y="88.5" width="6" height="3" fill="#dfe0ea" />
<rect x="884.5" y="88.5" width="7" height="7" fill="#dcdce6" stroke="#b0b0c8" stroke-width="0.8"/>
<rect x="888" y="92" width="7" height="7" fill="#dcdce6" stroke="#a0a0c0" stroke-width="0.8"/>
<path d="M893 97 L890 94 M890 94 L890 96.5 M890 94 L892.5 94" fill="none" stroke="#ff3010" stroke-width="1.2" />
<rect x="909.5" y="85" width="7" height="7" fill="#dcdce6" stroke="#b0b0c8" stroke-width="0.8"/>
<rect x="913" y="88.5" width="7" height="7" fill="#dcdce6" stroke="#b0b0c8" stroke-width="0.8"/>
<rect x="916.5" y="92" width="7" height="7" fill="#ffffff" stroke="#222" stroke-width="1.1"/>
<path d="M916.5 90.5 L920 94 M920 94 L920 91.5 M920 94 L917.5 94" fill="none" stroke="#ff3010" stroke-width="1.2" />
<circle cx="952" cy="91.8" r="6.3" fill="none" stroke="#4b4a6b" stroke-width="1.2"/>
<rect x="950.5" y="84.0" width="3" height="3" fill="#ffffff" stroke="#4b4a6b" stroke-width="1"/>
<rect x="950.5" y="96.6" width="3" height="3" fill="#ffffff" stroke="#4b4a6b" stroke-width="1"/>
<rect x="944.2" y="90.3" width="3" height="3" fill="#ffffff" stroke="#4b4a6b" stroke-width="1"/>
<rect x="956.8" y="90.3" width="3" height="3" fill="#ffffff" stroke="#4b4a6b" stroke-width="1"/>
<circle cx="994.8" cy="92.6" r="7.6" fill="none" stroke="#c4c4c4" stroke-width="1.2"/>
<rect x="989.5" y="92" width="10.6" height="1.4" fill="#b8b8c4" />
<rect x="994.1" y="87.3" width="1.4" height="10.6" fill="#b8b8c4" />
<rect x="4" y="173" width="22" height="1" fill="#dadada" />
<rect x="4" y="238" width="22" height="1" fill="#dadada" />
<rect x="4" y="385" width="22" height="1" fill="#dadada" />
<rect x="4" y="421" width="22" height="1" fill="#dadada" />
<rect x="4" y="485" width="22" height="1" fill="#dadada" />
<rect x="4" y="549" width="22" height="1" fill="#dadada" />
<rect x="4" y="641" width="22" height="1" fill="#dadada" />
<rect x="4" y="116" width="23" height="23" fill="#ffffff" />
<rect x="4.5" y="116.5" width="22" height="22" fill="none" stroke="#a0a0a0" stroke-width="1"/>
<path d="M11.5 119.5 L11.5 130.5 L14.5 127.5 L17 133 L19 132 L16.5 126.5 L20 126.5 Z" fill="#f4f4fa" stroke="#6a6a90" stroke-width="1" />
<path d="M20 137 L25 132 L25 137 Z" fill="#000" stroke="none" stroke-width="1" />
<path d="M12.5 147 Q10 154 12.5 163" fill="none" stroke="#6a6a90" stroke-width="1.2" />
<rect x="9.8" y="151.8" width="3" height="3" fill="#ffffff" stroke="#4b4a6b" stroke-width="1"/>
<path d="M14 155 L19.8 157.5 L17 162 Z" fill="#2a2a40" stroke="none" stroke-width="1" />
<path d="M20 165.5 L25 160.5 L25 165.5 Z" fill="#000" stroke="none" stroke-width="1" />
<rect x="8" y="187" width="11" height="2" fill="#4b4a6b" />
<rect x="11.5" y="184" width="2" height="11" fill="#4b4a6b" />
<rect x="11.5" y="193" width="11" height="2" fill="#4b4a6b" />
<rect x="17.5" y="187" width="2" height="11" fill="#4b4a6b" />
<path d="M13 192.5 L21.5 184" fill="none" stroke="#4b4a6b" stroke-width="1" />
<path d="M20 200.5 L25 195.5 L25 200.5 Z" fill="#000" stroke="none" stroke-width="1" />
<path d="M7.5 218 A5.3 5.3 0 0 0 18.1 218 Z" fill="#c8c8dc"/>
<circle cx="12.8" cy="217.5" r="5.3" fill="none" stroke="#4b4a6b" stroke-width="1.2"/>
<path d="M16.5 221.5 L22.5 227.5" fill="none" stroke="#4b4a6b" stroke-width="2.4" />
<path d="M20 229 L25 224 L25 229 Z" fill="#000" stroke="none" stroke-width="1" />
<path d="M15 247.5 Q11 254 11.5 256.5 Q12.5 259 15 259.5 Q17.5 259 18.5 256.5 Q19 254 15 247.5 Z" fill="#e4e4ee" stroke="#5c5c80" stroke-width="1.1" />
<rect x="14.5" y="250" width="1" height="5" fill="#8080a0" />
<rect x="11" y="260" width="8" height="3" fill="#1a1a30" />
<path d="M20 265.5 L25 260.5 L25 265.5 Z" fill="#000" stroke="none" stroke-width="1" />
<path d="M8.5 282 Q9.5 278.5 13 281.5 Q16 285 18.5 286.5 Q21.5 287 21.5 284 Q21 281.5 18.5 282" fill="none" stroke="#4b4a6b" stroke-width="1.6" />
<circle cx="19.6" cy="284.5" r="2.2" fill="#4b4a6b"/>
<rect x="9.5" y="306.5" width="11" height="11" fill="#ffffff" stroke="#4b4a6b" stroke-width="1"/>
<rect x="10" y="312" width="10" height="5" fill="#dfe0ea" />
<path d="M20 320 L25 315 L25 320 Z" fill="#000" stroke="none" stroke-width="1" />
<path d="M9 340 A5.9 5.9 0 0 0 20.8 340 Z" fill="#dfe0ea"/>
<circle cx="14.9" cy="339.8" r="5.8" fill="none" stroke="#4b4a6b" stroke-width="1.1"/>
<path d="M20 348.5 L25 343.5 L25 348.5 Z" fill="#000" stroke="none" stroke-width="1" />
<path d="M8.8 367.8 L11.8 362.5 L18.5 362.5 L21.5 367.8 L18.5 373.2 L11.8 373.2 Z" fill="#ffffff" stroke="#4b4a6b" stroke-width="1" />
<path d="M9.5 368 L21 368 L18.3 372.7 L12 372.7 Z" fill="#dfe0ea" stroke="none" stroke-width="1" />
<path d="M20 376 L25 371 L25 376 Z" fill="#000" stroke="none" stroke-width="1" />
<path d="M8.5 410.5 L13 396.5 L16.5 396.5 L21 410.5 L17.5 410.5 L16.7 407.5 L12.8 407.5 L12 410.5 Z M13.6 404.5 L15.9 404.5 L14.75 400.5 Z" fill="#e8e8f4" stroke="#6a6a90" stroke-width="1.1" />
<path d="M20 413 L25 408 L25 413 Z" fill="#000" stroke="none" stroke-width="1" />
<path d="M9.5 444 L20.5 433.5" fill="none" stroke="#2a2a40" stroke-width="1.3" />
<path d="M8 442 L11.5 446 M19 431.5 L22.5 435.5 M11 440 L13 442 M17.5 435.5 L19.5 437.5" fill="none" stroke="#2a2a40" stroke-width="1.3" />
<path d="M20 449 L25 444 L25 449 Z" fill="#000" stroke="none" stroke-width="1" />
<path d="M12.5 461.5 L17.5 472" fill="none" stroke="#4b4a6b" stroke-width="1" />
<rect x="10.5" y="459.5" width="4" height="4" fill="#ff8a00" stroke="#6a5a5a" stroke-width="0.8"/>
<rect x="15.5" y="470" width="4" height="4" fill="#ff8a00" stroke="#6a5a5a" stroke-width="0.8"/>
<path d="M20 477 L25 472 L25 477 Z" fill="#000" stroke="none" stroke-width="1" />
<defs><linearGradient id="gsh" x1="0" y1="0" x2="1" y2="1"><stop offset="0" stop-color="#d0d0e0"/><stop offset="1" stop-color="#6a6a90"/></linearGradient></defs>
<rect x="10" y="500" width="10" height="10" fill="url(#gsh)" />
<rect x="8.5" y="498.5" width="9" height="9" fill="#ffffff" stroke="#4b4a6b" stroke-width="1"/>
<rect x="9" y="503" width="8" height="4" fill="#dfe0ea" />
<path d="M20 513 L25 508 L25 513 Z" fill="#000" stroke="none" stroke-width="1" />
<path d="M12.5 524.5 L19 530.5 Q17 533.5 14 532 Z" fill="#ffffff" stroke="#4b4a6b" stroke-width="1" />
<path d="M14.5 530 Q17 532.5 18.5 531 L16 529 Z" fill="#3a4a8a" stroke="none" stroke-width="1" />
<path d="M13 531.5 L9 535.5 M7.5 534 L10.5 537" fill="none" stroke="#4b4a6b" stroke-width="1" />
<defs><linearGradient id="gtr" x1="0" y1="0" x2="0" y2="1"><stop offset="0" stop-color="#c0c0d8"/><stop offset="1" stop-color="#3a3a60"/></linearGradient></defs>
<path d="M16 538 L19.5 530.5 L23 538 Z" fill="url(#gtr)" stroke="none" stroke-width="1" />
<rect x="7" y="567" width="8" height="8" fill="#ee7a10" />
<rect x="9" y="569" width="2" height="2" fill="#ffb050" />
<rect x="11" y="571" width="2" height="2" fill="#c05000" />
<path d="M10 573.5 L18 563.5" fill="none" stroke="#8a9aa8" stroke-width="1.6" />
<path d="M17 561.5 L20.5 558.5 Q22.5 558.5 22.5 560.5 L19.5 564 Z" fill="#2a2a40" stroke="none" stroke-width="1" />
<path d="M16 562 L20 566" fill="none" stroke="#2a2a40" stroke-width="1.3" />
<path d="M20 577 L25 572 L25 577 Z" fill="#000" stroke="none" stroke-width="1" />
<path d="M9.5 592 L13 588.5 L17.5 593 L14 596.5 Z" fill="#ffffff" stroke="#4b4a6b" stroke-width="1" />
<path d="M10.5 593 L14 596.5 L16.8 593.7 Z" fill="#ee8a10" stroke="none" stroke-width="1" />
<defs><linearGradient id="gfo" x1="0" y1="0" x2="0" y2="1"><stop offset="0" stop-color="#ffe0a0"/><stop offset="1" stop-color="#e89010"/></linearGradient></defs>
<path d="M14 603 L17.5 596 L21 603 Z" fill="url(#gfo)" stroke="none" stroke-width="1" />
<path d="M20 605 L25 600 L25 605 Z" fill="#000" stroke="none" stroke-width="1" />
<path d="M7.5 619 L11 615.5 L15.5 620 L12 623.5 Z" fill="#ffffff" stroke="#4b4a6b" stroke-width="1" />
<path d="M8.5 620 L12 623.5 L14.8 620.7 Z" fill="#ee8a10" stroke="none" stroke-width="1" />
<rect x="13.5" y="623.5" width="7" height="6" fill="none" stroke="#4b4a6b" stroke-width="1"/>
<rect x="16.5" y="621.5" width="6" height="6" fill="#f4f4f4" stroke="#4b4a6b" stroke-width="1"/>
<rect x="16" y="622" width="2" height="5" fill="#ee8a10" />
<rect x="16" y="625" width="5" height="2" fill="#ee8a10" />
<circle cx="15" cy="665.6" r="7.6" fill="none" stroke="#c8c8c8" stroke-width="1.2"/>
<rect x="9.7" y="665" width="10.6" height="1.4" fill="#b8b8c4" />
<rect x="14.3" y="660.3" width="1.4" height="10.6" fill="#b8b8c4" />
<rect x="37" y="140" width="1.3" height="1.3" fill="#000" />
<rect x="39" y="140" width="1.3" height="1.3" fill="#000" />
<rect x="41" y="140" width="1.3" height="1.3" fill="#000" />
<rect x="37" y="142" width="1.3" height="1.3" fill="#000" />
<rect x="37" y="144" width="1.3" height="1.3" fill="#000" />
<path d="M39.5 142.5 L45 148" fill="none" stroke="#000" stroke-width="1.2" />
<path d="M45.5 148.5 L45.5 144.5 L41.5 148.5 Z" fill="#000" stroke="none" stroke-width="1" />
<rect x="43" y="139" width="1.3" height="1.3" fill="#000" />
<rect x="37" y="146" width="1.3" height="1.3" fill="#000" />
<rect x="1330" y="152" width="16" height="505" fill="#ffffff" />
<rect x="1330" y="152" width="16" height="16" fill="#f0f0f0" />
<path d="M1334 164.5 L1337.8 160.5 L1341.6 164.5" fill="none" stroke="#404040" stroke-width="2.2" />
<rect x="1330" y="334" width="15" height="137" fill="#c8c8c8" />
<rect x="1330" y="640" width="16" height="17" fill="#f0f0f0" />
<path d="M1334 645.5 L1337.8 649.5 L1341.6 645.5" fill="none" stroke="#404040" stroke-width="2.2" />
<rect x="49" y="658" width="650" height="16" fill="#f3f3f3" />
<rect x="48" y="657" width="651" height="1" fill="#a0a0a0" />
<path d="M52.0 659.5 L57.5 659.5 L61.0 663 L61.0 670.5 L52.0 670.5 Z" fill="#ffffff" stroke="#000" stroke-width="1" />
<path d="M57.5 659.5 L57.5 663 L61.0 663" fill="none" stroke="#000" stroke-width="1" />
<rect x="54.0" y="665.5" width="5" height="1.2" fill="#000" />
<rect x="55.9" y="663.6" width="1.2" height="5" fill="#000" />
<rect x="69.7" y="661.5" width="1.3" height="8.5" fill="#7a7a7a" />
<path d="M77 661.5 L72 665.75 L77 670 Z" fill="#7a7a7a" stroke="none" stroke-width="1" />
<path d="M94.3 661.5 L89 665.75 L94.3 670 Z" fill="#7a7a7a" stroke="none" stroke-width="1" />
<text x="115.4" y="671" font-size="12" fill="#000" textLength="27.8" lengthAdjust="spacingAndGlyphs" >1 of 1</text>
<path d="M166.6 661.5 L172 665.75 L166.6 670 Z" fill="#7a7a7a" stroke="none" stroke-width="1" />
<path d="M182 661.5 L187.3 665.75 L182 670 Z" fill="#7a7a7a" stroke="none" stroke-width="1" />
<rect x="187.6" y="661.5" width="1.3" height="8.5" fill="#7a7a7a" />
<path d="M198.0 659.5 L203.5 659.5 L207.0 663 L207.0 670.5 L198.0 670.5 Z" fill="#ffffff" stroke="#000" stroke-width="1" />
<path d="M203.5 659.5 L203.5 663 L207.0 663" fill="none" stroke="#000" stroke-width="1" />
<rect x="200.0" y="665.5" width="5" height="1.2" fill="#000" />
<rect x="201.9" y="663.6" width="1.2" height="5" fill="#000" />
<path d="M212.5 674 L212.5 658 L271 658 L278.5 665.5 L278.5 674" fill="#ffffff" stroke="#a0a0a0" stroke-width="1" />
<text x="227.4" y="669" font-size="12" fill="#000" textLength="33.6" lengthAdjust="spacingAndGlyphs" >Page 1</text>
<rect x="693" y="661" width="1.5" height="2" fill="#b0b0b0" />
<rect x="693" y="665" width="1.5" height="2" fill="#b0b0b0" />
<rect x="693" y="669" width="1.5" height="2" fill="#b0b0b0" />
<rect x="698" y="657" width="1" height="17" fill="#a0a0a0" />
<rect x="699" y="658" width="631" height="16" fill="#ffffff" />
<rect x="699" y="658" width="17" height="16" fill="#f0f0f0" />
<path d="M709.8 662.3 L705.8 666 L709.8 669.7" fill="none" stroke="#404040" stroke-width="2.2" />
<rect x="861" y="658" width="321" height="15" fill="#c8c8c8" />
<rect x="1312" y="658" width="17" height="16" fill="#f0f0f0" />
<path d="M1317.3 662.3 L1321.3 666 L1317.3 669.7" fill="none" stroke="#404040" stroke-width="2.2" />
<circle cx="1337" cy="664.8" r="4.3" fill="#ffffff" stroke="#3a3a55" stroke-width="1.2"/>
<circle cx="1337" cy="664.8" r="1.6" fill="none" stroke="#3a3a55" stroke-width="0.9"/>
<path d="M1340 668 L1344 672" fill="none" stroke="#3a3a55" stroke-width="1.8" />
<rect x="30" y="675" width="1317" height="20" fill="#f3f3f3" />
<rect x="29" y="675" width="1" height="20" fill="#dadada" />
<rect x="30" y="675" width="1317" height="1" fill="#d8d8d8" />
<rect x="0" y="694" width="1366" height="1" fill="#d8d8d8" />
<rect x="34.5" y="678" width="1.5" height="2" fill="#b0b0b0" />
<rect x="34.5" y="682" width="1.5" height="2" fill="#b0b0b0" />
<rect x="34.5" y="686" width="1.5" height="2" fill="#b0b0b0" />
<path d="M42 680 L47.5 684.5 L42 689 Z" fill="#000" stroke="none" stroke-width="1" />
<path d="M55 691 L62 683" fill="none" stroke="#6a8a90" stroke-width="2" />
<path d="M61 682 L64.5 678.5 Q66.5 678.5 66.5 680.5 L63 684 Z" fill="#2a2a40" stroke="none" stroke-width="1" />
<path d="M60.5 681.5 L64 685" fill="none" stroke="#2a2a40" stroke-width="1.3" />
<path d="M78 680.5 L72 684.75 L78 689" fill="none" stroke="#c8c8d0" stroke-width="1.2" />
<rect x="84" y="676" width="52" height="18" fill="#ffffff" />
<rect x="101" y="676" width="17" height="18" fill="#231815" />
<rect x="84.5" y="676.5" width="51" height="17" fill="none" stroke="#555555" stroke-width="1"/>
<path d="M85 677 L100.5 693 M100.5 677 L85 693" fill="none" stroke="#000" stroke-width="0.9" />
<path d="M1310 680.5 L1316.5 684.75 L1310 689" fill="none" stroke="#c8c8c8" stroke-width="1.3" />
<path d="M1328.5 680.5 L1331.5 684.5 L1328.5 688.5 M1332 680.5 L1335 684.5 L1332 688.5" fill="none" stroke="#b8b8c8" stroke-width="1.1" />
<text x="5.7" y="716" font-size="12" fill="#000" textLength="85.3" lengthAdjust="spacingAndGlyphs" >( 18,153; 17,709 )</text>
<rect x="100" y="704" width="14" height="14" fill="#ffffff" />
<rect x="100.5" y="704.5" width="13" height="13" fill="none" stroke="#000" stroke-width="1"/>
<path d="M104.5 707 L110.5 711 L104.5 715 Z" fill="#000" stroke="none" stroke-width="1" />
<text x="158.5" y="716" font-size="12" fill="#000" textLength="88.5" lengthAdjust="spacingAndGlyphs" >Ellipse on Layer 1</text>
<rect x="912.5" y="704.5" width="14" height="11" fill="#dfe0ea" stroke="#5c5c80" stroke-width="1"/>
<rect x="914" y="706" width="11" height="8" fill="#ffffff" />
<rect x="914" y="706" width="5.5" height="2.5" fill="#d03030" />
<rect x="919.5" y="706" width="5.5" height="2.5" fill="#30a040" />
<rect x="914" y="711.5" width="11" height="2.5" fill="#3060c0" />
<circle cx="919.5" cy="710" r="2.2" fill="#ffffff" stroke="#222" stroke-width="1"/>
<rect x="915" y="717" width="9" height="1.2" fill="#5c5c80" />
<path d="M941.5 710.5 L946.5 705.5 L952.5 711.5 L947.5 716.5 Z" fill="#ffffff" stroke="#4b4a6b" stroke-width="1" />
<path d="M942.5 711.5 L947.5 716.5 L951.5 712.5 Z" fill="#ee8a10" stroke="none" stroke-width="1" />
<path d="M952.5 711.5 Q955.5 713 955.5 717" fill="none" stroke="#ee8a10" stroke-width="1.4" />
<rect x="944" y="703.5" width="1" height="4" fill="#4b4a6b" />
<rect x="962" y="702" width="18" height="18" fill="#ffffff" />
<rect x="962.5" y="702.5" width="17" height="17" fill="none" stroke="#000" stroke-width="1"/>
<path d="M962.5 702.5 L979.5 719.5 M979.5 702.5 L962.5 719.5" fill="none" stroke="#000" stroke-width="1" />
<text x="983.4" y="716.5" font-size="12" fill="#000" textLength="28.6" lengthAdjust="spacingAndGlyphs" >None</text>
<rect x="1144" y="700" width="1" height="24" fill="#d8d8d8" />
<g transform="translate(1154,704) scale(1.05)"><path d="M4 0.5 Q0.5 7 1 9 Q2 10.8 4 11 Q6 10.8 7 9 Q7.5 7 4 0.5 Z" fill="#ffffff" stroke="#5c5c80" stroke-width="1.1"/><rect x="3.5" y="2.5" width="1" height="5" fill="#9090b0"/><rect x="0.5" y="11" width="7.5" height="2" fill="#111122"/></g>
<rect x="1171" y="702" width="18" height="18" fill="#ffffff" />
<rect x="1171.5" y="702.5" width="17" height="17" fill="none" stroke="#7a7a7a" stroke-width="1"/>
<text x="1192.4" y="716" font-size="12" fill="#000" textLength="77.3" lengthAdjust="spacingAndGlyphs" >C:0 M:0 Y:0 K:0</text>
<text x="1276" y="716" font-size="12" fill="#000" textLength="40.8" lengthAdjust="spacingAndGlyphs" >4,000 pt</text>
<rect x="1347" y="112" width="19" height="583" fill="#f3f3f3" />
<rect x="1347" y="112" width="1" height="583" fill="#d8d8d8" />
<rect x="1352" y="117" width="1.5" height="1.5" fill="#b0b0b0" />
<rect x="1356" y="117" width="1.5" height="1.5" fill="#b0b0b0" />
<rect x="1360" y="117" width="1.5" height="1.5" fill="#b0b0b0" />
<path d="M1354 123 L1359.5 127.75 L1354 132.5 Z" fill="#000" stroke="none" stroke-width="1" />
<path d="M1352 148.5 L1359 141" fill="none" stroke="#cfcfcf" stroke-width="2.2" />
<path d="M1358 139.5 L1361 136.5 Q1363.5 136.5 1363.5 139 L1360.5 142 Z" fill="#bdbdbd" stroke="none" stroke-width="1" />
<path d="M1357 139 L1361 143" fill="none" stroke="#bdbdbd" stroke-width="1.3" />
<path d="M1352.5 161 L1357 156 L1361.5 161" fill="none" stroke="#c8c8d0" stroke-width="1.3" />
<rect x="1348" y="167" width="18" height="17.3" fill="#ffffff" />
<rect x="1348.5" y="167.5" width="17" height="17" fill="none" stroke="#444" stroke-width="1"/>
<path d="M1349 168 L1365 184 M1365 168 L1349 184" fill="none" stroke="#222" stroke-width="0.9" />
<rect x="1348" y="184.3" width="18" height="17" fill="#5a5a5a" />
<rect x="1349" y="185.3" width="16" height="15.6" fill="#231815" />
<rect x="1348" y="201.2" width="18" height="17" fill="#5a5a5a" />
<rect x="1349" y="202.2" width="16" height="15.6" fill="#3e3a39" />
<rect x="1348" y="218.1" width="18" height="17" fill="#5a5a5a" />
<rect x="1349" y="219.1" width="16" height="15.6" fill="#595757" />
<rect x="1348" y="235" width="18" height="17" fill="#5a5a5a" />
<rect x="1349" y="236" width="16" height="15.6" fill="#727171" />
<rect x="1348" y="251.9" width="18" height="17" fill="#5a5a5a" />
<rect x="1349" y="252.9" width="16" height="15.6" fill="#898989" />
<rect x="1348" y="268.8" width="18" height="17" fill="#5a5a5a" />
<rect x="1349" y="269.8" width="16" height="15.6" fill="#9fa0a0" />
<rect x="1348" y="285.7" width="18" height="17" fill="#5a5a5a" />
<rect x="1349" y="286.7" width="16" height="15.6" fill="#b5b5b6" />
<rect x="1348" y="302.6" width="18" height="17" fill="#5a5a5a" />
<rect x="1349" y="303.6" width="16" height="15.6" fill="#c9caca" />
<rect x="1348" y="319.5" width="18" height="17" fill="#5a5a5a" />
<rect x="1349" y="320.5" width="16" height="15.6" fill="#dcdddd" />
<rect x="1348" y="336.4" width="18" height="17" fill="#5a5a5a" />
<rect x="1349" y="337.4" width="16" height="15.6" fill="#efefef" />
<rect x="1348" y="353.5" width="18" height="18.5" fill="#ffffff" />
<rect x="1348" y="372" width="18" height="17" fill="#5a5a5a" />
<rect x="1349" y="373" width="16" height="15.6" fill="#1d2088" />
<rect x="1348" y="389" width="18" height="17" fill="#5a5a5a" />
<rect x="1349" y="390" width="16" height="15.6" fill="#00a0e9" />
<rect x="1348" y="406" width="18" height="17" fill="#5a5a5a" />
<rect x="1349" y="407" width="16" height="15.6" fill="#009944" />
<rect x="1348" y="423" width="18" height="17" fill="#5a5a5a" />
<rect x="1349" y="424" width="16" height="15.6" fill="#fff100" />
<rect x="1348" y="440" width="18" height="17" fill="#5a5a5a" />
<rect x="1349" y="441" width="16" height="15.6" fill="#e60012" />
<rect x="1348" y="457" width="18" height="17" fill="#5a5a5a" />
<rect x="1349" y="458" width="16" height="15.6" fill="#e4007f" />
<rect x="1348" y="474" width="18" height="17" fill="#5a5a5a" />
<rect x="1349" y="475" width="16" height="15.6" fill="#ab4a8c" />
<rect x="1348" y="491" width="18" height="17" fill="#5a5a5a" />
<rect x="1349" y="492" width="16" height="15.6" fill="#f08300" />
<rect x="1348" y="508" width="18" height="17" fill="#5a5a5a" />
<rect x="1349" y="509" width="16" height="15.6" fill="#f5b2b2" />
<rect x="1348" y="525" width="18" height="17" fill="#5a5a5a" />
<rect x="1349" y="526" width="16" height="15.6" fill="#8f7a70" />
<rect x="1348" y="542" width="18" height="17" fill="#5a5a5a" />
<rect x="1349" y="543" width="16" height="15.6" fill="#d3d0e8" />
<rect x="1348" y="559" width="18" height="17" fill="#5a5a5a" />
<rect x="1349" y="560" width="16" height="15.6" fill="#a99fd0" />
<rect x="1348" y="576" width="18" height="17" fill="#5a5a5a" />
<rect x="1349" y="577" width="16" height="15.6" fill="#6e8fcc" />
<rect x="1348" y="593" width="18" height="17" fill="#5a5a5a" />
<rect x="1349" y="594" width="16" height="15.6" fill="#7b6db3" />
<rect x="1348" y="610" width="18" height="17" fill="#5a5a5a" />
<rect x="1349" y="611" width="16" height="15.6" fill="#8e86b4" />
<rect x="1348" y="627" width="18" height="17" fill="#5a5a5a" />
<rect x="1349" y="628" width="16" height="15.6" fill="#506494" />
<rect x="1348" y="644" width="18" height="17" fill="#5a5a5a" />
<rect x="1349" y="645" width="16" height="15.6" fill="#57506e" />
<rect x="1347" y="655" width="19" height="40" fill="#f3f3f3" />
<rect x="1347" y="112" width="1" height="583" fill="#d8d8d8" />
<path d="M1352.5 658 L1357 662.5 L1361.5 658" fill="none" stroke="#b8b8c8" stroke-width="1.3" />
<path d="M1352.5 676 L1355.5 680 L1352.5 684 M1356.5 676 L1359.5 680 L1356.5 684" fill="none" stroke="#b8b8c8" stroke-width="1.1" />
<defs><filter id="dsh" x="-20%" y="-5%" width="140%" height="115%"><feGaussianBlur stdDeviation="1.2"/></filter></defs>
<rect x="753" y="107" width="78" height="226" fill="rgba(0,0,0,0.35)" filter="url(#dsh)"/>
<rect x="750" y="104" width="78" height="227" fill="#ffffff" />
<rect x="750.5" y="104.5" width="77" height="226" fill="none" stroke="#0078d7" stroke-width="1"/>
<text x="753.2" y="117" font-size="12" fill="#000" >None</text>
<text x="753.2" y="132" font-size="12" fill="#000" >Hairline</text>
<text x="753.2" y="147" font-size="12" fill="#000" textLength="28.35" lengthAdjust="spacingAndGlyphs" >0.5 pt</text>
<text x="753.2" y="162" font-size="12" fill="#000" textLength="34.65" lengthAdjust="spacingAndGlyphs" >0.75 pt</text>
<text x="753.2" y="177" font-size="12" fill="#000" textLength="28.35" lengthAdjust="spacingAndGlyphs" >1.0 pt</text>
<text x="753.2" y="192" font-size="12" fill="#000" textLength="28.35" lengthAdjust="spacingAndGlyphs" >1.5 pt</text>
<text x="753.2" y="207" font-size="12" fill="#000" textLength="28.35" lengthAdjust="spacingAndGlyphs" >2.0 pt</text>
<text x="753.2" y="222" font-size="12" fill="#000" textLength="28.35" lengthAdjust="spacingAndGlyphs" >3.0 pt</text>
<rect x="751" y="225" width="76" height="15" fill="#3399ff" />
<text x="753.2" y="237" font-size="12" fill="#ffffff" textLength="28.35" lengthAdjust="spacingAndGlyphs" >4.0 pt</text>
<text x="753.2" y="252" font-size="12" fill="#000" textLength="28.35" lengthAdjust="spacingAndGlyphs" >8.0 pt</text>
<text x="753.2" y="267" font-size="12" fill="#000" textLength="34.65" lengthAdjust="spacingAndGlyphs" >10.0 pt</text>
<text x="753.2" y="282" font-size="12" fill="#000" textLength="34.65" lengthAdjust="spacingAndGlyphs" >12.0 pt</text>
<text x="753.2" y="297" font-size="12" fill="#000" textLength="34.65" lengthAdjust="spacingAndGlyphs" >16.0 pt</text>
<text x="753.2" y="312" font-size="12" fill="#000" textLength="34.65" lengthAdjust="spacingAndGlyphs" >24.0 pt</text>
<text x="753.2" y="327" font-size="12" fill="#000" textLength="34.65" lengthAdjust="spacingAndGlyphs" >36.0 pt</text></svg></body></html>
